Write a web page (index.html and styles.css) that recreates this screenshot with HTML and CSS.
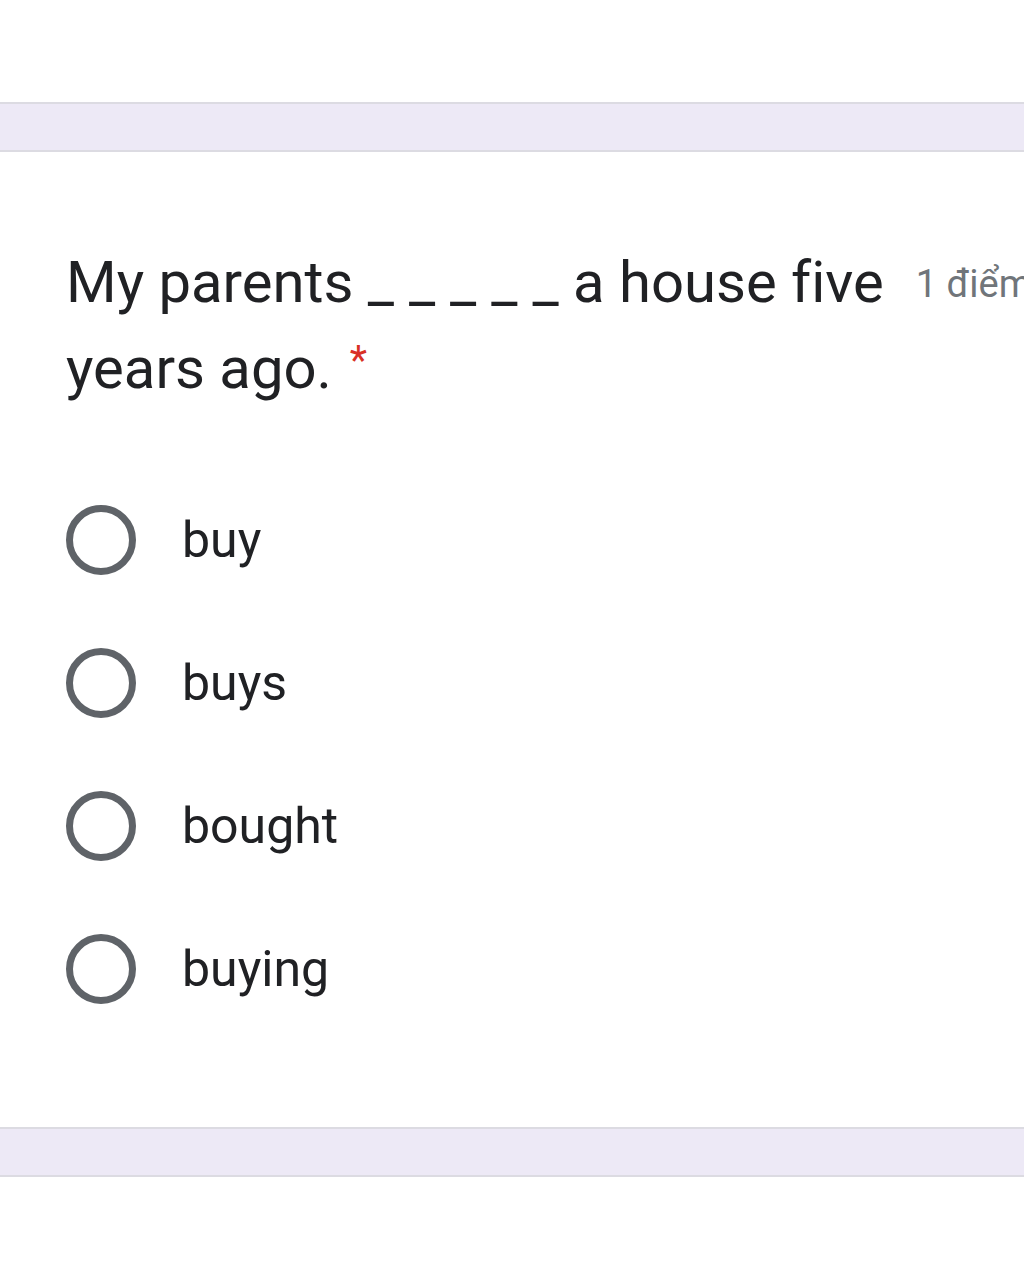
FILE: index.html
```html
<!DOCTYPE html>
<html lang="vi">
<head>
<meta charset="utf-8">
<title>Question</title>
<link rel="stylesheet" href="styles.css">
</head>
<body>
  <div class="top-space"></div>
  <div class="band"></div>
  <section class="card">
    <div class="q-header">
      <div class="q-title">My parents <span class="blank">_____</span> a house five years ago.<span class="req">*</span></div>
      <div class="q-points">1 điểm</div>
    </div>
    <div class="options">
      <label class="option"><span class="radio"></span><span class="opt-text">buy</span></label>
      <label class="option"><span class="radio"></span><span class="opt-text">buys</span></label>
      <label class="option"><span class="radio"></span><span class="opt-text">bought</span></label>
      <label class="option"><span class="radio"></span><span class="opt-text">buying</span></label>
    </div>
  </section>
  <div class="band"></div>
</body>
</html>
```
FILE: styles.css
```css
html, body {
  margin: 0;
  padding: 0;
  background: #ffffff;
  overflow: hidden;
}
body {
  font-family: Roboto, "Noto Sans", sans-serif;
  color: #202124;
  font-variant-ligatures: none;
}
.top-space {
  height: 102px;
}
.band {
  height: 46px;
  background: #ede9f6;
  border-top: 2px solid #dcdbe2;
  border-bottom: 2px solid #dcdbe2;
}
.card {
  background: #ffffff;
  padding: 87px 0 87px 66px;
  overflow: hidden;
}
.q-header {
  display: flex;
  align-items: flex-start;
  gap: 28px;
  margin-right: -8px;
}
.q-title {
  flex: 1;
  min-width: 0;
  font-size: 58px;
  line-height: 86px;
  color: #202124;
}
.blank {
  letter-spacing: 15px;
  margin-right: -15px;
}
.req {
  color: #d93025;
  font-size: 40px;
  line-height: 0;
  margin-left: 18px;
  vertical-align: 14px;
}
.q-points {
  flex: none;
  font-size: 38px;
  line-height: 86px;
  color: #70757a;
  padding-top: 2px;
}
.options {
  margin-top: 57px;
  display: flex;
  flex-direction: column;
}
.option {
  height: 143px;
  display: flex;
  align-items: center;
  gap: 46px;
}
.radio {
  flex: none;
  width: 56px;
  height: 56px;
  border: 7px solid #5f6368;
  border-radius: 50%;
}
.opt-text {
  font-size: 50px;
  color: #202124;
}
```
